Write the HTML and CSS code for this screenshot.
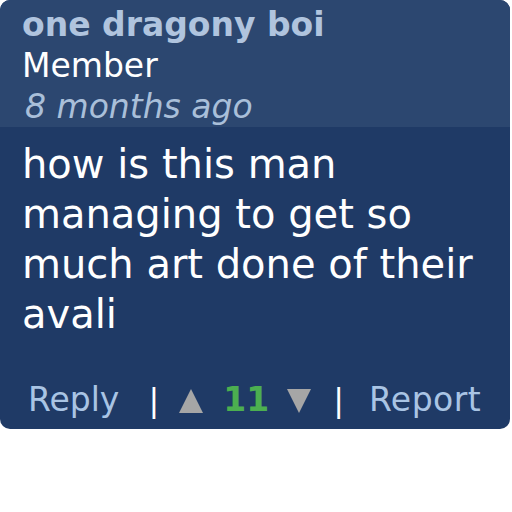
FILE: index.html
```html
<!DOCTYPE html>
<html lang="en">
<head>
  <meta charset="UTF-8" />
  <title>Comment</title>
  <link rel="stylesheet" href="styles.css">
</head>
<body>
  <div class="comment">
    <div class="comment-head">
      <div class="author">one dragony boi</div>
      <div class="rank">Member</div>
      <div class="time">8 months ago</div>
    </div>
    <div class="comment-body">
      <p>how is this man managing to get so much art done of their avali</p>
    </div>
    <div class="comment-foot">
      <a class="link">Reply</a>
      <span class="sep sep-left">|</span>
      <svg class="vote up" width="24" height="24" viewBox="0 0 24 24"><polygon points="12,0 24,24 0,24"/></svg>
      <span class="score">11</span>
      <svg class="vote down" width="24" height="24" viewBox="0 0 24 24"><polygon points="0,0 24,0 12,24"/></svg>
      <span class="sep sep-right">|</span>
      <a class="link report">Report</a>
    </div>
  </div>
</body>
</html>
```

FILE: styles.css
```css
body {
  margin: 0;
  background: #fff;
  font-family: 'DejaVu Sans', Verdana, sans-serif;
}
.comment {
  width: 510px;
  background: #1f3a66;
  border-radius: 10px;
  overflow: hidden;
}
.comment-head {
  background: #2c4770;
  padding: 4px 22px 0;
  font-size: 33px;
  line-height: 41px;
}
.comment-head .author {
  font-weight: bold;
  color: #b0c4de;
}
.comment-head .rank {
  color: #fff;
}
.comment-head .time {
  font-style: italic;
  color: #a9bfd9;
  padding-left: 3px;
}
.comment-body p {
  margin: 0;
  padding: 12px 22px 0;
  font-size: 40px;
  line-height: 50px;
  color: #fff;
}
.comment-foot {
  display: flex;
  align-items: center;
  padding: 41px 28px 9px;
  font-size: 33px;
  line-height: 40px;
}
.comment-foot .link {
  color: #a9c4e4;
}
.comment-foot .report {
  letter-spacing: 0.5px;
}
.comment-foot .sep {
  color: #fff;
  font-size: 32px;
}
.comment-foot .sep-left {
  margin: 0 20px 0 29px;
}
.comment-foot .sep-right {
  margin: 0 25px 0 22px;
}
.comment-foot .vote {
  fill: #a6a6a6;
  margin-top: 2px;
}
.comment-foot .score {
  color: #4caf50;
  font-weight: bold;
  margin: 0 18px 0 20px;
}
```
